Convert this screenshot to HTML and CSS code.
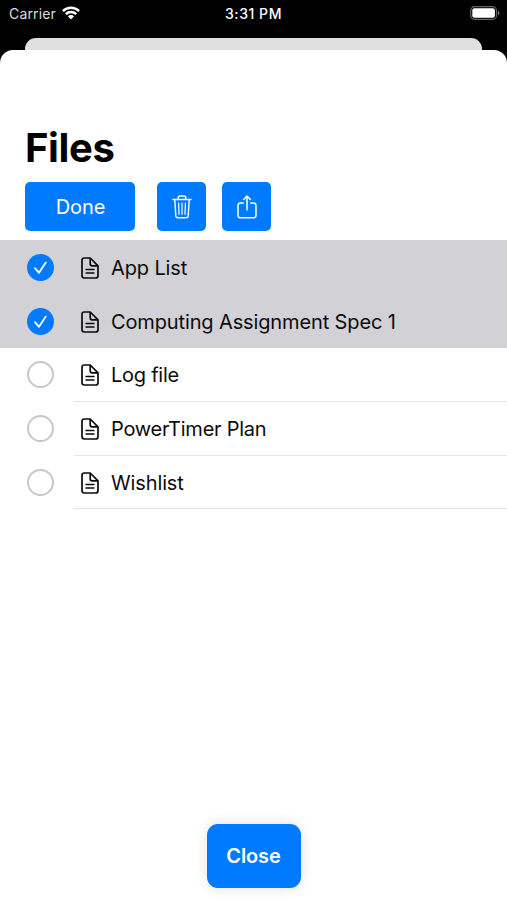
FILE: index.html
```html
<!DOCTYPE html>
<html lang="en">
<head>
<meta charset="utf-8">
<title>Files</title>
<link rel="stylesheet" href="styles.css">
</head>
<body>
<svg class="defs" width="0" height="0" aria-hidden="true">
  <symbol id="doc" viewBox="0 0 18 22">
    <path d="M3.3 1H9.2L17 8.8V18.7Q17 21 14.7 21H3.3Q1 21 1 18.7V3.3Q1 1 3.3 1ZM9.2 1V6.8Q9.2 8.8 11.2 8.8H17" fill="none" stroke="currentColor" stroke-width="1.7" stroke-linejoin="round"/>
    <path d="M5 12.5H13M5 16H13" fill="none" stroke="currentColor" stroke-width="1.4" stroke-linecap="round"/>
  </symbol>
  <symbol id="check" viewBox="0 0 27 27">
    <path d="M8 14.2L12 18.8L18.8 8.6" fill="none" stroke="#fff" stroke-width="1.8" stroke-linecap="round" stroke-linejoin="round"/>
  </symbol>
</svg>
<div class="phone">
  <header class="status">
    <div class="carrier"><span>Carrier</span>
      <svg class="wifi" viewBox="0 0 18 14"><g fill="none" stroke="#fff" stroke-width="2.4"><path d="M.9 5.1A11.5 11.5 0 0 1 17.1 5.1"/><path d="M3.8 8.2A7.4 7.4 0 0 1 14.2 8.2"/></g><path d="M5.9 10.3A4.4 4.4 0 0 1 12.1 10.3L9 13.5Z" fill="#fff"/></svg>
    </div>
    <time class="clock">3:31 PM</time>
    <svg class="battery" viewBox="0 0 30 14"><rect x=".7" y=".7" width="25.8" height="12.6" rx="3.8" fill="none" stroke="#666" stroke-width="1.2"/><rect x="2.3" y="2.3" width="22.6" height="9.4" rx="2.2" fill="#fff"/><path d="M28 4.8Q29.6 5.5 29.6 7Q29.6 8.5 28 9.2Z" fill="#777"/></svg>
  </header>
  <div class="behind"></div>
  <main class="sheet">
    <h1 class="title">Files</h1>
    <div class="toolbar">
      <button class="btn done"><span>Done</span></button>
      <button class="btn icon trash" aria-label="Delete"><svg viewBox="0 0 20 24"><g fill="none" stroke="currentColor" stroke-width="1.4" stroke-linecap="round" stroke-linejoin="round"><path d="M.9 4.5H19.1M6.2 4.3V3Q6.2 1 8.2 1H11.8Q13.8 1 13.8 3V4.3M2.8 4.7L3.8 20.7Q4 22.8 6 22.8H14Q16 22.8 16.2 20.7L17.2 4.7"/><path d="M6.6 8L7 19.3M10 8V19.3M13.4 8L13 19.3" stroke-width="1.2"/></g></svg></button>
      <button class="btn icon share" aria-label="Share"><svg viewBox="0 0 20 24"><path d="M6.3 8H3.6Q1 8 1 10.6V20.2Q1 22.8 3.6 22.8H16.4Q19 22.8 19 20.2V10.6Q19 8 16.4 8H13.7M10 15V1.2M6.6 4.5L10 1.1L13.4 4.5" fill="none" stroke="currentColor" stroke-width="1.5" stroke-linecap="round" stroke-linejoin="round"/></svg></button>
    </div>
    <ul class="files">
      <li class="row selected"><svg class="mark"><use href="#check"/></svg><div class="cell"><svg class="doc"><use href="#doc"/></svg><span>App List</span></div></li>
      <li class="row selected"><svg class="mark"><use href="#check"/></svg><div class="cell"><svg class="doc"><use href="#doc"/></svg><span>Computing Assignment Spec 1</span></div></li>
      <li class="row"><span class="mark"></span><div class="cell"><svg class="doc"><use href="#doc"/></svg><span class="tight">Log file</span></div></li>
      <li class="row"><span class="mark"></span><div class="cell"><svg class="doc"><use href="#doc"/></svg><span class="tight">PowerTimer Plan</span></div></li>
      <li class="row"><span class="mark"></span><div class="cell"><svg class="doc"><use href="#doc"/></svg><span>Wishlist</span></div></li>
    </ul>
    <button class="close">Close</button>
  </main>
</div>
</body>
</html>
```
FILE: styles.css
```css
* { box-sizing: border-box; }
body { margin: 0; background: #000; font-family: Inter, "Liberation Sans", sans-serif; color: #0b0b0c; }
button { border: 0; padding: 0; font-family: inherit; color: #fff; background: #007aff; }
.defs { position: absolute; }
.phone { width: 507px; height: 900px; display: flex; flex-direction: column; overflow: hidden; background: #000; }
.status { height: 38px; flex: none; display: grid; grid-template-columns: 1fr auto 1fr; align-items: start; padding: 0 7px 0 9px; color: #fff; font-size: 14px; }
.carrier { display: flex; align-items: center; height: 26px; gap: 6px; color: #ddd; letter-spacing: .15px; }
.wifi { width: 18px; height: 14px; }
.clock { line-height: 28px; font-weight: 500; letter-spacing: .55px; margin: 0 1px 0 -1px; }
.battery { width: 30px; height: 14px; justify-self: end; margin-top: 6px; }
.behind { height: 12px; flex: none; margin: 0 25px; background: #e0e0e0; border-radius: 11px 11px 0 0; }
.sheet { flex: 1; display: flex; flex-direction: column; background: #fff; border-radius: 13px 13px 0 0; padding-top: 73px; }
.title { margin: 0 0 0 25px; height: 50px; line-height: 50px; font-size: 40px; font-weight: 700; letter-spacing: -.4px; color: #000; }
.toolbar { display: flex; margin: 9px 0 0 25px; height: 49px; }
.btn { height: 49px; border-radius: 5px; display: flex; align-items: center; justify-content: center; font-size: 20px; }
.done { width: 110px; margin-right: 22px; padding-left: 1px; letter-spacing: -.1px; }
.icon { width: 49px; }
.icon svg { width: 20px; height: 24px; }
.trash { margin-right: 16px; }
.files { list-style: none; margin: 9.4px 0 0; padding: 0; font-size: 20px; letter-spacing: -.13px; }
.row { height: 53.8px; display: flex; align-items: center; padding-left: 27px; }
.selected { background: #d1d1d6; }
.mark { width: 27px; height: 27px; flex: none; border-radius: 50%; border: 2px solid #c7c7c9; }
.selected .mark { background: #007aff; border: 0; }
.cell { flex: 1; height: 100%; margin-left: 20px; padding: 2px 0 0 7px; display: flex; align-items: center; gap: 12px; border-bottom: 1px solid #e5e5e7; white-space: nowrap; }
.selected .cell { border-color: transparent; }
.tight { letter-spacing: -.25px; }
.doc { width: 18px; height: 22px; flex: none; }
.close { align-self: center; margin: auto 0 12px; width: 94px; height: 64px; border-radius: 11px; font-size: 20px; font-weight: 600; letter-spacing: -.1px; box-shadow: 0 0 14px rgba(0,0,0,.12); }
```
